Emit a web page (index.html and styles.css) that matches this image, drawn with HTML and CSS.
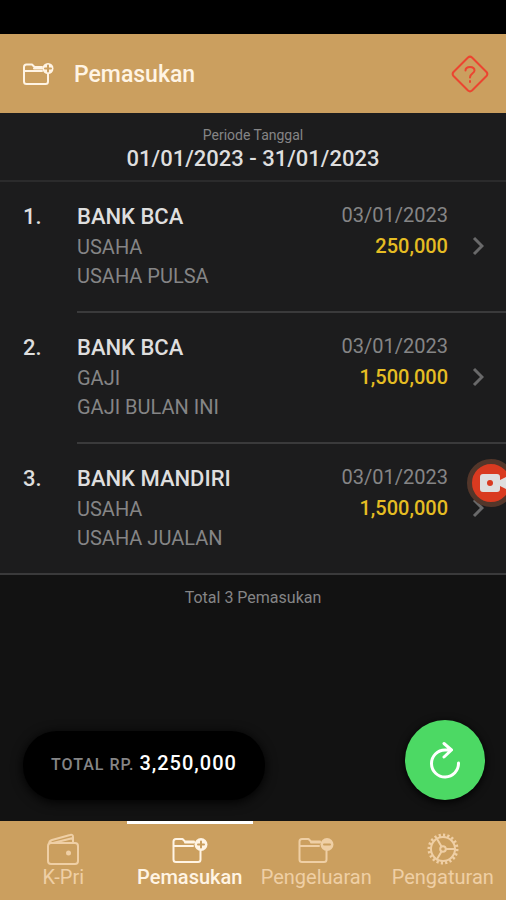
FILE: index.html
```html
<!DOCTYPE html>
<html lang="id">
<head>
  <meta charset="utf-8">
  <meta name="viewport" content="width=device-width, initial-scale=1">
  <title>Pemasukan</title>
  <link rel="stylesheet" href="styles.css">
</head>
<body>
  <div class="page">
    <div class="statusbar"></div>
    <header class="navbar">
      <svg class="icon nav-icon" viewBox="0 0 32 28">
        <path d="M20 7H12.500L10 4.500H4.500Q2 4.500 2 7V21.500Q2 24 4.500 24H23.500Q26 24 26 21.500V14M2 11H20M12 8.500H20"/>
        <circle class="fill" cx="26" cy="8.500" r="5.500"/>
        <path class="cut" d="M26 5.500V11.500M23 8.500H29"/>
      </svg>
      <h1>Pemasukan</h1>
      <button class="help" type="button" aria-label="Bantuan">
        <svg class="icon" viewBox="0 0 38 38">
          <path d="M17 2.500Q19 .8 21 2.500L35.500 17Q37.200 19 35.500 21L21 35.500Q19 37.200 17 35.500L2.500 21Q.8 19 2.500 17Z"/>
          <path d="M14.500 15.500Q14.500 12 19 12T23.500 15.500C23.500 18.500 19 18 19 22.500M19 26V27"/>
        </svg>
      </button>
    </header>

    <main>
      <div class="period">
        <div class="period-label">Periode Tanggal</div>
        <div class="period-date">01/01/2023 - 31/01/2023</div>
      </div>

      <div class="list-wrap">
        <ol class="list">
          <li>
            <a class="item" href="#">
              <span class="no">1.</span>
              <span class="inner">
                <span class="text">
                  <span class="bank">BANK BCA</span>
                  <span class="sub">USAHA</span>
                  <span class="sub">USAHA PULSA</span>
                </span>
                <span class="after">
                  <span class="date">03/01/2023</span>
                  <span class="amount">250,000</span>
                </span>
                <svg class="icon chevron" viewBox="0 0 12 20"><path d="M2 2L10 10L2 18"/></svg>
              </span>
            </a>
          </li>
          <li>
            <a class="item" href="#">
              <span class="no">2.</span>
              <span class="inner">
                <span class="text">
                  <span class="bank">BANK BCA</span>
                  <span class="sub">GAJI</span>
                  <span class="sub">GAJI BULAN INI</span>
                </span>
                <span class="after">
                  <span class="date">03/01/2023</span>
                  <span class="amount">1,500,000</span>
                </span>
                <svg class="icon chevron" viewBox="0 0 12 20"><path d="M2 2L10 10L2 18"/></svg>
              </span>
            </a>
          </li>
          <li>
            <a class="item" href="#">
              <span class="no">3.</span>
              <span class="inner">
                <span class="text">
                  <span class="bank">BANK MANDIRI</span>
                  <span class="sub">USAHA</span>
                  <span class="sub">USAHA JUALAN</span>
                </span>
                <span class="after">
                  <span class="date">03/01/2023</span>
                  <span class="amount">1,500,000</span>
                </span>
                <svg class="icon chevron" viewBox="0 0 12 20"><path d="M2 2L10 10L2 18"/></svg>
              </span>
            </a>
          </li>
        </ol>
        <button class="recorder" type="button" aria-label="Rekam layar">
          <svg viewBox="0 0 26 18">
            <path d="M3 0H17Q20 0 20 3V6L26 3V15L20 12V15Q20 18 17 18H3Q0 18 0 15V3Q0 0 3 0Z"/>
            <circle cx="10" cy="9" r="3"/>
          </svg>
        </button>
      </div>
      <p class="count">Total 3 Pemasukan</p>

      <div class="floating">
        <div class="total">TOTAL RP. <b>3,250,000</b></div>
        <button class="fab" type="button" aria-label="Muat ulang">
          <svg class="icon" viewBox="0 0 32 38">
            <path d="M29.500 22A13.500 13.500 0 1 1 16 9H22M15 2.500L22.500 9L15 16"/>
          </svg>
        </button>
      </div>
    </main>

    <nav class="tabbar">
      <a class="tab" href="#">
        <svg class="icon" viewBox="0 0 32 32">
          <path d="M4 10H28Q31 10 31 13V28Q31 31 28 31H4Q1 31 1 28V13Q1 10 4 10ZM2 11Q2 8 5 7L23 2Q26 1 26 4V10M6 10L26 5"/>
          <circle class="fill" cx="21.500" cy="20" r="2.500"/>
        </svg>
        <span>K-Pri</span>
      </a>
      <a class="tab active" href="#">
        <svg class="icon" viewBox="0 0 36 32">
          <path d="M22 8.500H13L10.500 6H4Q1.500 6 1.500 8.500V26.500Q1.500 29 4 29H26Q28.500 29 28.500 26.500V18M2 13H21M13 9.500H22"/>
          <circle class="fill" cx="29" cy="11.500" r="6.500"/>
          <path class="cut" d="M29 8.500V14.500M26 11.500H32"/>
        </svg>
        <span>Pemasukan</span>
      </a>
      <a class="tab" href="#">
        <svg class="icon" viewBox="0 0 36 32">
          <path d="M22 8.500H13L10.500 6H4Q1.500 6 1.500 8.500V26.500Q1.500 29 4 29H26Q28.500 29 28.500 26.500V18M2 13H21M13 9.500H22"/>
          <circle class="fill" cx="29" cy="11.500" r="6.500"/>
          <path class="cut" d="M26 11.500H32"/>
        </svg>
        <span>Pengeluaran</span>
      </a>
      <a class="tab" href="#">
        <svg class="icon" viewBox="0 0 32 32">
          <circle cx="16" cy="16" r="12"/>
          <circle class="teeth" cx="16" cy="16" r="14" pathLength="40"/>
          <circle cx="16" cy="16" r="2.800"/>
          <path d="M19 16H28M14.500 13.500L9.800 5.600M14.500 18.500L9.800 26.400"/>
        </svg>
        <span>Pengaturan</span>
      </a>
    </nav>
  </div>
</body>
</html>
```

FILE: styles.css
```css
* {
  box-sizing: border-box;
}
body {
  margin: 0;
  font-family: Roboto, "Liberation Sans", sans-serif;
  color: #dedede;
  background-color: #121212;
}
a {
  color: inherit;
  text-decoration: none;
}
button {
  padding: 0;
  border: 0;
  background: none;
  cursor: pointer;
}
.icon {
  display: block;
  fill: none;
  stroke: currentColor;
  stroke-width: 2;
  stroke-linecap: round;
  stroke-linejoin: round;
}
.icon .fill {
  fill: currentColor;
  stroke: none;
}
.icon .cut {
  stroke: #cb9f5f;
}
.page {
  display: flex;
  flex-direction: column;
  min-height: 100vh;
}
.statusbar {
  height: 34px;
  background-color: #000;
}

/* header */
.navbar {
  display: flex;
  align-items: center;
  height: 79px;
  padding: 0 17px 0 22px;
  color: #fff4e4;
  background-color: #cb9f5f;
}
.nav-icon {
  width: 32px;
  height: 28px;
}
.navbar h1 {
  flex: 1;
  margin: 0;
  padding: 2px 0 0 20px;
  font-size: 23px;
  line-height: 32px;
  font-weight: 500;
}
.help {
  color: #ec4430;
}
.help svg {
  width: 38px;
  height: 38px;
}

main {
  flex: 1;
  display: flex;
  flex-direction: column;
}
.period {
  padding: 14px 0 7px;
  border-bottom: 2px solid #2b2b2c;
  text-align: center;
  background-color: #1c1c1d;
}
.period-label {
  font-size: 14px;
  line-height: 16px;
  color: #858586;
}
.period-date {
  padding-top: 2px;
  font-size: 22px;
  line-height: 28px;
  font-weight: 500;
}

/* income list */
.list-wrap {
  position: relative;
  overflow: hidden;
}
.list {
  margin: 0;
  padding: 0;
  list-style: none;
  border-bottom: 2px solid #3a3a3b;
  background-color: #1c1c1d;
}
.item {
  display: flex;
  padding-left: 23px;
}
.no {
  width: 54px;
  padding-top: 19px;
  font-size: 22px;
  line-height: 32px;
  font-weight: 500;
}
.inner {
  flex: 1;
  display: flex;
  align-items: center;
  padding: 19px 22px 20px 0;
  border-bottom: 2px solid #3a3a3b;
}
li:last-child .inner {
  border-bottom: 0;
}
.text, .after {
  display: flex;
  flex-direction: column;
}
.text {
  flex: 1;
}
.bank {
  font-size: 22px;
  line-height: 32px;
  font-weight: 500;
}
.sub, .date, .amount {
  font-size: 20px;
  line-height: 29px;
}
.sub, .date {
  color: #858586;
}
.after {
  align-self: flex-start;
  text-align: right;
}
.amount {
  line-height: 32px;
  font-weight: 500;
  color: #e5bd23;
}
.chevron {
  width: 12px;
  height: 20px;
  margin-left: 24px;
  color: #69696a;
  stroke-width: 3;
  stroke-linecap: butt;
  stroke-linejoin: miter;
}
.count {
  margin: 0;
  padding: 12px 0;
  font-size: 16px;
  line-height: 22px;
  text-align: center;
  color: #858586;
}

/* screen recorder bubble, half off the edge */
.recorder {
  position: absolute;
  right: -9px;
  bottom: 68px;
  width: 48px;
  height: 48px;
  padding-left: 8px;
  border: 5px solid #53362a;
  border-radius: 50%;
  background-color: #d93a20;
}
.recorder svg {
  display: block;
  width: 26px;
  height: 18px;
  fill: #dedede;
}
.recorder circle {
  fill: #d93a20;
}

.floating {
  display: flex;
  justify-content: space-between;
  align-items: flex-end;
  margin-top: auto;
  padding: 0 21px 21px 23px;
}
.total {
  padding: 17px 28px 20px;
  border-radius: 34px;
  font-size: 16px;
  line-height: 30px;
  font-weight: 500;
  letter-spacing: 1px;
  color: #858586;
  background-color: #000;
  box-shadow: 0 2px 12px #000;
}
.total b {
  font-size: 20px;
  font-weight: 500;
  color: #fff;
}
.fab {
  display: flex;
  align-items: center;
  justify-content: center;
  width: 80px;
  height: 80px;
  border-radius: 50%;
  color: #fff;
  background-color: #4cd964;
  box-shadow: 0 2px 8px #000;
}
.fab svg {
  width: 32px;
  height: 38px;
  stroke-width: 3;
}

/* bottom tabs */
.tabbar {
  display: flex;
  height: 79px;
  color: #efcfa5;
  background-color: #cb9f5f;
}
.tab {
  flex: 1 1 0;
  min-width: 0;
  display: flex;
  flex-direction: column;
  align-items: center;
  padding-top: 9px;
  border-top: 3px solid transparent;
  font-size: 20px;
  line-height: 24px;
}
.tab.active {
  border-color: #fff;
  color: #fff4e4;
  font-weight: 500;
}
.tab svg {
  height: 32px;
}
.teeth {
  stroke-width: 3;
  stroke-linecap: butt;
  stroke-dasharray: 1;
}
```
